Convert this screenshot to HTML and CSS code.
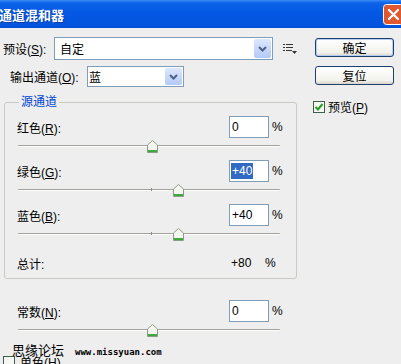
FILE: index.html
```html
<!DOCTYPE html>
<html lang="zh">
<head>
    <meta charset="UTF-8">
    <title>通道混和器</title>
    <link rel="stylesheet" href="styles.css">
</head>
<body>
<div class="window">
    <div class="titlebar">
        <span class="title">通道混和器</span>
        <svg class="close" width="21" height="21" viewBox="0 0 21 21">
            <rect x="0.5" y="0.5" width="20" height="20" rx="3" fill="#E0582F" stroke="#fff"/>
            <path d="M6 6 L15 15 M15 6 L6 15" stroke="#fff" stroke-width="2.2" stroke-linecap="round"/>
        </svg>
    </div>
    <div class="content">
        <div class="left">
            <div class="row preset">
                <label class="lbl-preset">预设(<u>S</u>):</label>
                <div class="combo combo-wide">
                    <span>自定</span>
                    <span class="drop"><svg width="9" height="6" viewBox="0 0 9 6"><path d="M1 1 L4.5 4.5 L8 1" stroke="#4D6185" stroke-width="2" fill="none"/></svg></span>
                </div>
                <svg class="menu-icon" width="14" height="10" viewBox="0 0 14 10">
                    <rect x="0" y="0" width="2" height="1" fill="#333"/>
                    <rect x="0" y="3" width="2" height="1" fill="#333"/>
                    <rect x="0" y="6" width="2" height="1" fill="#333"/>
                    <rect x="3" y="0" width="7" height="1" fill="#333"/>
                    <rect x="3" y="3" width="7" height="1" fill="#333"/>
                    <rect x="3" y="6" width="6" height="1" fill="#333"/>
                    <path d="M9 7 L14 7 L11.5 10 Z" fill="#333"/>
                </svg>
            </div>
            <div class="row output">
                <label class="lbl-output">输出通道(<u>O</u>):</label>
                <div class="combo combo-narrow">
                    <span>蓝</span>
                    <span class="drop"><svg width="9" height="6" viewBox="0 0 9 6"><path d="M1 1 L4.5 4.5 L8 1" stroke="#4D6185" stroke-width="2" fill="none"/></svg></span>
                </div>
            </div>

            <div class="group">
                <span class="group-title">源通道</span>

                <div class="ch-row">
                    <span class="ch-name">红色(<u>R</u>):</span>
                    <span class="val">0</span>
                    <span class="pct">%</span>
                </div>
                <div class="slider">
                    <div class="track"></div>
                    <span class="tick"></span>
                    <svg class="thumb" style="left: 50%" width="11" height="13" viewBox="0 0 11 13"><path d="M5.5 0.5 L10.5 5 V12.5 H0.5 V5 Z" fill="#F6F6F0" stroke="#8C9A8C"/><rect x="1" y="10" width="9" height="2" fill="#3DAA3D"/></svg>
                </div>

                <div class="ch-row">
                    <span class="ch-name">绿色(<u>G</u>):</span>
                    <span class="val"><span class="sel">+40</span></span>
                    <span class="pct">%</span>
                </div>
                <div class="slider">
                    <div class="track"></div>
                    <span class="tick"></span>
                    <svg class="thumb" style="left: 60%" width="11" height="13" viewBox="0 0 11 13"><path d="M5.5 0.5 L10.5 5 V12.5 H0.5 V5 Z" fill="#F6F6F0" stroke="#8C9A8C"/><rect x="1" y="10" width="9" height="2" fill="#3DAA3D"/></svg>
                </div>

                <div class="ch-row">
                    <span class="ch-name">蓝色(<u>B</u>):</span>
                    <span class="val">+40</span>
                    <span class="pct">%</span>
                </div>
                <div class="slider">
                    <div class="track"></div>
                    <span class="tick"></span>
                    <svg class="thumb" style="left: 60%" width="11" height="13" viewBox="0 0 11 13"><path d="M5.5 0.5 L10.5 5 V12.5 H0.5 V5 Z" fill="#F6F6F0" stroke="#8C9A8C"/><rect x="1" y="10" width="9" height="2" fill="#3DAA3D"/></svg>
                </div>

                <div class="ch-row total">
                    <span class="ch-name">总计:</span>
                    <span class="total-val">+80</span>
                    <span class="total-pct">%</span>
                </div>
            </div>

            <div class="constant">
                <div class="ch-row">
                    <span class="ch-name">常数(<u>N</u>):</span>
                    <span class="val">0</span>
                    <span class="pct">%</span>
                </div>
                <div class="slider">
                    <div class="track"></div>
                    <span class="tick"></span>
                    <svg class="thumb" style="left: 50%" width="11" height="13" viewBox="0 0 11 13"><path d="M5.5 0.5 L10.5 5 V12.5 H0.5 V5 Z" fill="#F6F6F0" stroke="#8C9A8C"/><rect x="1" y="10" width="9" height="2" fill="#3DAA3D"/></svg>
                </div>
            </div>

            <div class="mono">
                <span class="check"></span>
                <span>单色(<u>H</u>)</span>
            </div>
        </div>

        <div class="right">
            <div class="btn btn-default">确定</div>
            <div class="btn btn-reset">复位</div>
            <div class="preview">
                <span class="check"><svg width="10" height="10" viewBox="0 0 10 10"><path d="M1.5 5 L4 7.5 L8.5 2" stroke="#21A121" stroke-width="2" fill="none"/></svg></span>
                <span>预览(<u>P</u>)</span>
            </div>
        </div>
    </div>

    <div class="watermark">
        <span class="wm-cn">思缘论坛</span>
        <span class="wm-url">www.missyuan.com</span>
    </div>
</div>
</body>
</html>
```

FILE: styles.css
```css
body {
    margin: 0;
    background-color: #eeeeee;
    font-family: "Liberation Sans", "Noto Sans CJK SC", sans-serif;
    font-size: 12px;
    color: #000;
}

.window {
    position: relative;
    height: 364px;
    overflow: hidden;
}

u {
    text-decoration: underline;
}

/* title bar */
.titlebar {
    height: 28px;
    display: flex;
    align-items: center;
    justify-content: space-between;
    background: linear-gradient(#3A8CF6 0, #0C63E8 3px, #0558E4 45%, #0352DC 100%);
}

.title {
    color: #fff;
    font-weight: bold;
    font-size: 13px;
    margin-left: -1px;
    text-shadow: 1px 1px 0 #0A3FA8;
}

.close {
    display: block;
    margin-right: -3px;
}

.content {
    display: flex;
}

.left {
    width: 313px;
}

.right {
    flex: 1;
}

/* top rows */
.row {
    display: flex;
    align-items: center;
}

.preset {
    margin-top: 9px;
    height: 23px;
}

.output {
    margin-top: 6px;
    height: 21px;
}

.lbl-preset {
    width: 54px;
    padding-left: 3px;
    box-sizing: border-box;
}

.lbl-output {
    width: 87px;
    padding-left: 10px;
    box-sizing: border-box;
}

.combo {
    height: 100%;
    box-sizing: border-box;
    border: 1px solid #7F9DB9;
    background-color: #fff;
    display: flex;
    align-items: center;
    justify-content: space-between;
}

.combo-wide {
    width: 219px;
    padding-left: 5px;
}

.combo-narrow {
    width: 97px;
    padding-left: 1px;
}

.drop {
    width: 17px;
    align-self: stretch;
    margin: 1px;
    border-radius: 2px;
    background: linear-gradient(#DCE7FD, #B4C9F6);
    display: flex;
    align-items: center;
    justify-content: center;
}

.menu-icon {
    margin-left: 10px;
}

/* group box */
.group {
    position: relative;
    margin: 15px 0 0 4px;
    width: 293px;
    box-sizing: border-box;
    border: 1px solid #CACAC2;
    border-radius: 3px;
    padding: 13px 9px 4px 12px;
}

.group-title {
    position: absolute;
    top: -7px;
    left: 14px;
    padding: 0 2px;
    line-height: 12px;
    background-color: #eeeeee;
    color: #0046D5;
}

.ch-row {
    display: flex;
    align-items: center;
    height: 22px;
}

.ch-name {
    flex: 1;
}

.val {
    width: 40px;
    height: 22px;
    box-sizing: border-box;
    border: 1px solid #7F9DB9;
    background-color: #fff;
    padding-left: 2px;
    line-height: 20px;
}

.sel {
    display: inline-block;
    line-height: 16px;
    padding: 0 1px;
    margin-left: -1px;
    background-color: #316AC5;
    color: #fff;
}

.pct {
    width: 15px;
    margin-left: 3px;
}

.total {
    margin-top: 4px;
}

.total-val {
    width: 34px;
    padding-left: 2px;
}

.total-pct {
    width: 22px;
}

/* sliders */
.slider {
    position: relative;
    height: 22px;
    box-sizing: border-box;
    padding-top: 7px;
    width: 262px;
    margin-left: 1px;
}

.track {
    height: 1px;
    background-color: #A3A39A;
    border-bottom: 1px solid #fff;
    border-radius: 1px;
}

.tick {
    position: absolute;
    top: 6px;
    left: 50%;
    margin-left: 2px;
    width: 1px;
    height: 3px;
    background-color: #8A8A8A;
}

.thumb {
    position: absolute;
    top: 2px;
    margin-left: -2px;
}

.constant {
    margin-top: 21px;
    padding-left: 17px;
    width: 270px;
}

/* checkboxes */
.check {
    width: 12px;
    height: 12px;
    box-sizing: border-box;
    border: 1px solid #3E5E4E;
    background-color: #f6f6f2;
    display: flex;
    align-items: center;
    justify-content: center;
}

.mono {
    display: flex;
    align-items: center;
    gap: 5px;
    margin-top: 9px;
    padding-left: 3px;
}

.preview {
    display: flex;
    align-items: center;
    gap: 3px;
    margin-top: 13px;
}

/* buttons */
.btn {
    width: 79px;
    height: 19px;
    margin-left: 2px;
    box-sizing: border-box;
    border: 1px solid #1F3F6E;
    border-radius: 3px;
    background: linear-gradient(#ffffff, #F2F2EC 80%, #D8D2C6);
    display: flex;
    align-items: center;
    justify-content: center;
}

.btn-default {
    margin-top: 10px;
    box-shadow: inset 0 0 0 1px #B6CCF2;
}

.btn-reset {
    margin-top: 9px;
}

/* watermark */
.watermark {
    position: absolute;
    left: 12px;
    top: 340px;
    display: flex;
    align-items: baseline;
}

.wm-cn {
    font-size: 13px;
}

.wm-url {
    margin-left: 11px;
    font-family: "DejaVu Sans Mono", monospace;
    font-weight: bold;
    font-size: 9px;
}
```
